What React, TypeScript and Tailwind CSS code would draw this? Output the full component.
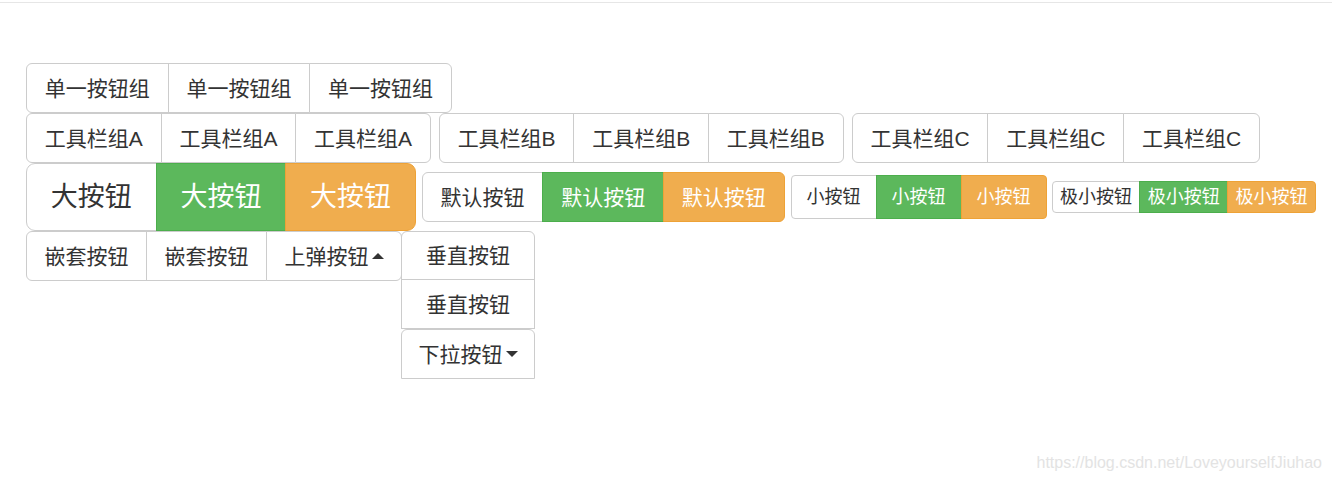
import React from "react";

type Size = "lg" | "md" | "sm" | "xs";
type Tone = "default" | "success" | "warning";

const sizeCls: Record<Size, string> = {
  lg: "h-[68px] px-[23.8px] text-[27px]",
  md: "h-[50px] px-[17.8px] text-[21px]",
  sm: "h-[44px] px-[15px] text-[18px]",
  xs: "h-[32px] px-[7.4px] text-[18px]",
};

const toneCls: Record<Tone, string> = {
  default: "bg-white text-[#333] border-[#ccc]",
  success: "bg-[#5cb85c] text-white border-[#4cae4c]",
  warning: "bg-[#f0ad4e] text-white border-[#eea236]",
};

const leftRound: Record<Size, string> = {
  lg: "rounded-l-[9px]",
  md: "rounded-l-[6px]",
  sm: "rounded-l-[4px]",
  xs: "rounded-l-[4px]",
};

const rightRound: Record<Size, string> = {
  lg: "rounded-r-[9px]",
  md: "rounded-r-[6px]",
  sm: "rounded-r-[4px]",
  xs: "rounded-r-[4px]",
};

function Caret({ up }: { up?: boolean }) {
  return up ? (
    <span className="ml-[3px] inline-block h-0 w-0 border-x-[6px] border-b-[6px] border-x-transparent border-b-[#333]" />
  ) : (
    <span className="ml-[3px] inline-block h-0 w-0 border-x-[6px] border-t-[6px] border-x-transparent border-t-[#333]" />
  );
}

type Item = { label: string; tone?: Tone; caret?: "up" | "down" };

function Group({ items, size = "md", pad, className = "" }: { items: Item[]; size?: Size; pad?: string; className?: string }) {
  return (
    <div className={`flex ${className}`}>
      {items.map((it, i) => (
        <button
          key={i}
          className={`flex items-center justify-center whitespace-nowrap border leading-none ${sizeCls[size]} ${pad ?? ""} ${toneCls[it.tone ?? "default"]} ${i > 0 ? "-ml-px" : ""} ${i === 0 ? leftRound[size] : ""} ${i === items.length - 1 ? rightRound[size] : ""}`}
        >
          {it.label}
          {it.caret && <Caret up={it.caret === "up"} />}
        </button>
      ))}
    </div>
  );
}

const three = (label: string): Item[] => [{ label }, { label }, { label }];
const colored = (label: string): Item[] => [
  { label },
  { label, tone: "success" },
  { label, tone: "warning" },
];

const vBtn =
  "flex items-center justify-center whitespace-nowrap border border-[#ccc] bg-white px-[16.5px] text-[21px] leading-none text-[#333]";

export default function App() {
  return (
    <div
      className="relative h-[483px] w-full overflow-hidden bg-white text-[#333]"
      style={{ fontFamily: '"Liberation Sans", "Noto Sans CJK SC", sans-serif' }}
    >
      <div className="mt-[2px] h-px bg-[#e6e6e6]" />

      <div className="ml-[26px] mt-[60px] flex flex-col">
        {/* single group */}
        <Group items={three("单一按钮组")} />

        {/* toolbar */}
        <div className="flex">
          <Group items={three("工具栏组A")} />
          <Group items={three("工具栏组B")} className="ml-[8px]" />
          <Group items={three("工具栏组C")} className="ml-[8px]" />
        </div>

        {/* sizes */}
        <div className="flex items-center">
          <Group items={colored("大按钮")} size="lg" />
          <Group items={colored("默认按钮")} className="ml-[6px]" />
          <Group items={colored("小按钮")} size="sm" className="ml-[6px]" />
          <Group items={colored("极小按钮")} size="xs" className="ml-[5px]" />
        </div>

        {/* nested + vertical */}
        <div className="flex items-start">
          <Group
            items={[{ label: "嵌套按钮" }, { label: "嵌套按钮" }, { label: "上弹按钮", caret: "up" }]}
            pad="!px-[17.5px]"
          />
          <div className="-ml-px flex flex-col">
            <div className="flex flex-col">
              <button className={`${vBtn} h-[49px] rounded-t-[6px]`}>垂直按钮</button>
              <button className={`${vBtn} -mt-px h-[50px]`}>垂直按钮</button>
            </div>
            <button className={`${vBtn} h-[50px] rounded-t-[6px]`}>
              下拉按钮
              <Caret />
            </button>
          </div>
        </div>
      </div>

      {/* watermark */}
      <div className="absolute bottom-[8px] right-[10px] text-[16px] text-[#e3e3e3]">
        https://blog.csdn.net/LoveyourselfJiuhao
      </div>
    </div>
  );
}
